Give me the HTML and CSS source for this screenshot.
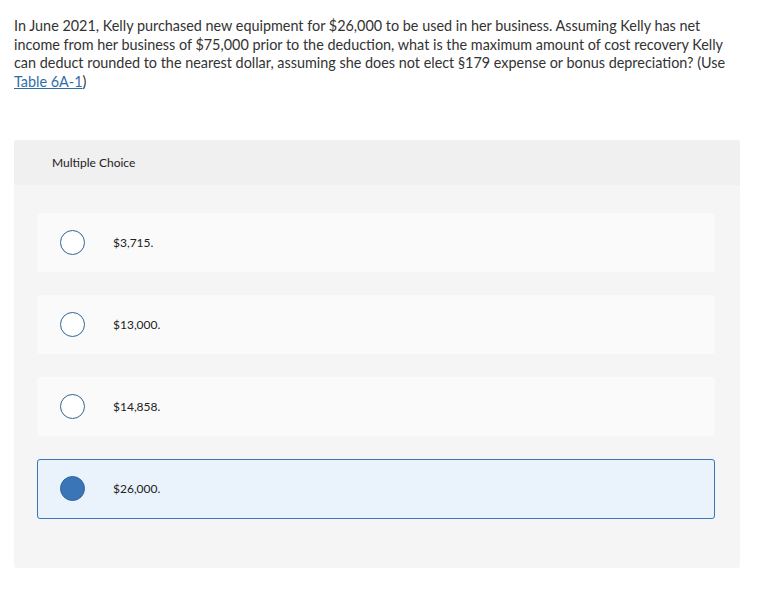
FILE: index.html
```html
<!DOCTYPE html>
<html>
<head>
<meta charset="utf-8">
<link rel="stylesheet" href="styles.css">
</head>
<body>
<div class="page">
  <p class="question">In June 2021, Kelly purchased new equipment for $26,000 to be used in her business. Assuming Kelly has net income from her business of $75,000 prior to the deduction, what is the maximum amount of cost recovery Kelly can deduct rounded to the nearest dollar, assuming she does not elect §179 expense or bonus depreciation? (Use <a class="link" href="#">Table 6A-1</a>)</p>
  <div class="panel">
    <div class="panel-head">Multiple Choice</div>
    <div class="panel-body">
      <div class="option"><span class="radio"></span><span class="label">$3,715.</span></div>
      <div class="option"><span class="radio"></span><span class="label">$13,000.</span></div>
      <div class="option"><span class="radio"></span><span class="label">$14,858.</span></div>
      <div class="option selected"><span class="radio"></span><span class="label">$26,000.</span></div>
    </div>
  </div>
</div>
</body>
</html>
```

FILE: styles.css
```css
html, body {
  margin: 0;
  padding: 0;
  background: #ffffff;
}
.page {
  padding: 17px 37px 0 14px;
  font-family: "Lato", "Liberation Sans", sans-serif;
  color: #333333;
}
.question {
  margin: 0;
  font-size: 14.4px;
  line-height: 18.7px;
  width: 727px;
}
.link {
  color: #2e6ea6;
  text-decoration: underline;
}
.panel {
  margin-top: 48px;
  width: 726px;
  background: #f5f5f5;
  border-radius: 3px;
  overflow: hidden;
}
.panel-head {
  height: 45px;
  background: #f0f0f0;
  padding-left: 38px;
  display: flex;
  align-items: center;
  font-size: 12px;
  color: #222;
}
.panel-body {
  padding: 28px 25px 49px 23px;
  display: flex;
  flex-direction: column;
  gap: 23px;
}
.option {
  height: 59px;
  background: #fafafa;
  border-radius: 3px;
  display: flex;
  align-items: center;
  padding-left: 23px;
  box-sizing: border-box;
}
.option.selected {
  background: #eaf2fb;
  border: 1px solid #3a76b8;
  padding-left: 22px;
  height: 60px;
}
.radio {
  width: 25px;
  height: 25px;
  box-sizing: border-box;
  border: 1.5px solid #2f6597;
  border-radius: 50%;
  background: #ffffff;
  flex: none;
}
.selected .radio {
  background: #3a75b8;
  border-color: #2f6597;
}
.label {
  margin-left: 28px;
  font-size: 12px;
  color: #222;
}
```
